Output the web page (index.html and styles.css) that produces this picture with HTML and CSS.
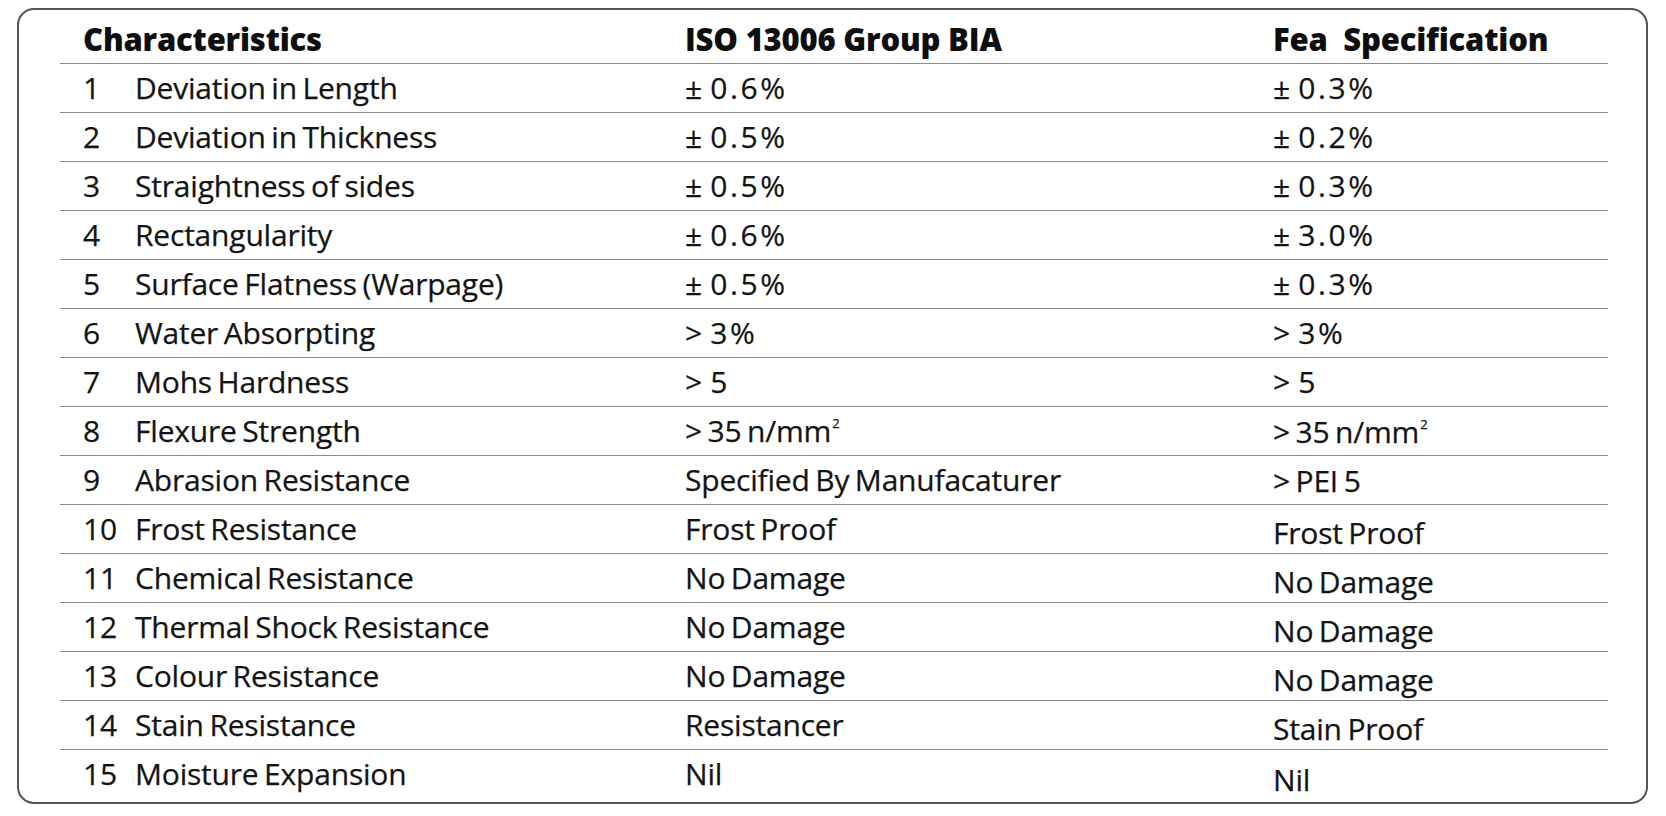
FILE: index.html
```html
<!DOCTYPE html>
<html lang="en">
<head>
<meta charset="utf-8">
<title>Characteristics</title>
<link rel="stylesheet" href="styles.css">
</head>
<body>
<div class="card">
  <div class="row head">
    <div class="span2">Characteristics</div>
    <div>ISO 13006 Group BIA</div>
    <div>Fea&nbsp; Specification</div>
  </div>
  <div class="row"><div>1</div><div>Deviation in Length</div><div class="num">± 0.6%</div><div class="num">± 0.3%</div></div>
  <div class="row"><div>2</div><div>Deviation in Thickness</div><div class="num">± 0.5%</div><div class="num">± 0.2%</div></div>
  <div class="row"><div>3</div><div>Straightness of sides</div><div class="num">± 0.5%</div><div class="num">± 0.3%</div></div>
  <div class="row"><div>4</div><div>Rectangularity</div><div class="num">± 0.6%</div><div class="num">± 3.0%</div></div>
  <div class="row"><div>5</div><div>Surface Flatness (Warpage)</div><div class="num">± 0.5%</div><div class="num">± 0.3%</div></div>
  <div class="row"><div>6</div><div>Water Absorpting</div><div class="num">&gt; 3%</div><div class="num">&gt; 3%</div></div>
  <div class="row"><div>7</div><div>Mohs Hardness</div><div class="num">&gt; 5</div><div class="num">&gt; 5</div></div>
  <div class="row"><div>8</div><div>Flexure Strength</div><div>&gt; 35 n/mm<sup>2</sup></div><div class="low1">&gt; 35 n/mm<sup>2</sup></div></div>
  <div class="row"><div>9</div><div>Abrasion Resistance</div><div>Specified By Manufacaturer</div><div class="low1">&gt; PEI 5</div></div>
  <div class="row"><div>10</div><div>Frost Resistance</div><div>Frost Proof</div><div class="low">Frost Proof</div></div>
  <div class="row"><div>11</div><div>Chemical Resistance</div><div>No Damage</div><div class="low">No Damage</div></div>
  <div class="row"><div>12</div><div>Thermal Shock Resistance</div><div>No Damage</div><div class="low">No Damage</div></div>
  <div class="row"><div>13</div><div>Colour Resistance</div><div>No Damage</div><div class="low">No Damage</div></div>
  <div class="row"><div>14</div><div>Stain Resistance</div><div>Resistancer</div><div class="low">Stain Proof</div></div>
  <div class="row last"><div>15</div><div>Moisture Expansion</div><div>Nil</div><div class="lower">Nil</div></div>
</div>
</body>
</html>
```

FILE: styles.css
```css
html, body {
  margin: 0;
  padding: 0;
  background: #ffffff;
}

body {
  width: 1666px;
  height: 816px;
  overflow: hidden;
  font-family: "Open Sans", "Liberation Sans", sans-serif;
  color: #141414;
}

.card {
  box-sizing: border-box;
  margin: 8px 0 0 17px;
  width: 1631px;
  height: 796px;
  border: 2px solid #555555;
  border-radius: 17px;
  padding: 0 38px 0 41px;
}

.row {
  display: grid;
  grid-template-columns: 52px 550px 588px 1fr;
  padding-left: 23px;
  height: 48px;
  border-bottom: 1px solid #8c8c8c;
  font-size: 30px;
  line-height: 48px;
  white-space: nowrap;
  letter-spacing: -0.2px;
  word-spacing: -2px;
  -webkit-text-stroke: 0.25px #141414;
}

.row.last {
  border-bottom: none;
}

.row.head {
  height: 53px;
  font-weight: 800;
  font-size: 31px;
  letter-spacing: -0.2px;
  word-spacing: 0;
  color: #0e0e0e;
  -webkit-text-stroke: 0;
  align-items: end;
}

.row.head > div {
  line-height: 48px;
}

.span2 {
  grid-column: span 2;
}

.num {
  letter-spacing: 2.6px;
  word-spacing: -5px;
}

sup {
  font-size: 13px;
  line-height: 0;
  vertical-align: 14px;
  margin-left: 1px;
}

.low1 {
  padding-top: 1px;
}

.low {
  padding-top: 4px;
}

.lower {
  padding-top: 6px;
}
```
